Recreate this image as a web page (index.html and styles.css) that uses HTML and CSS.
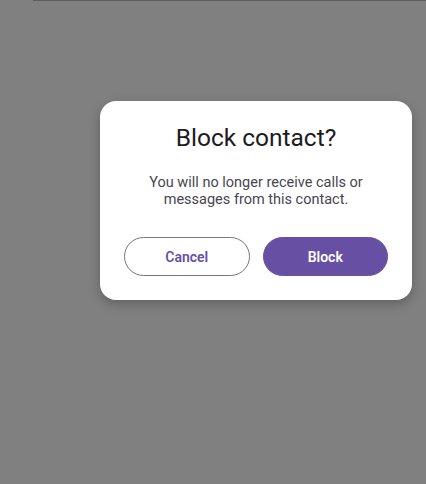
FILE: index.html
```html
<!DOCTYPE html>
<html lang="en">
<head>
<meta charset="utf-8">
<title>Block contact</title>
<link rel="stylesheet" href="styles.css">
</head>
<body>
<div class="topline"></div>
<div class="dialog" role="dialog" aria-labelledby="dlg-title">
  <h2 class="dialog-title" id="dlg-title">Block contact?</h2>
  <p class="dialog-text">You will no longer receive calls or<br>messages from this contact.</p>
  <div class="dialog-actions">
    <button class="btn btn-outline">Cancel</button>
    <button class="btn btn-filled">Block</button>
  </div>
</div>
</body>
</html>
```
FILE: styles.css
```css
html, body {
  margin: 0;
  padding: 0;
}
body {
  width: 426px;
  height: 484px;
  background: #808080;
  font-family: Roboto, "Noto Sans", "Liberation Sans", sans-serif;
  overflow: hidden;
}
.topline {
  height: 1px;
  margin-left: 33px;
  background: #5c5c5c;
}
.dialog {
  box-sizing: border-box;
  width: 312px;
  margin: 100px 0 0 100px;
  padding: 22px 24px 24px;
  background: #ffffff;
  border-radius: 16px;
  box-shadow: 0 4px 12px rgba(0, 0, 0, 0.25);
}
.dialog-title {
  margin: 0;
  font-size: 24.5px;
  line-height: 30px;
  font-weight: 400;
  color: #1d1b20;
  text-align: center;
}
.dialog-text {
  margin: 21px 0 0;
  font-size: 14.5px;
  line-height: 17px;
  color: #49454f;
  text-align: center;
}
.dialog-actions {
  display: flex;
  gap: 13px;
  margin-top: 29px;
}
.btn {
  flex: 1;
  height: 39px;
  border-radius: 20px;
  font-family: inherit;
  font-size: 14px;
  font-weight: 600;
  cursor: pointer;
}
.btn-outline {
  background: #ffffff;
  border: 1px solid #79747e;
  color: #6750a4;
}
.btn-filled {
  background: #6750a4;
  border: 1px solid #6750a4;
  color: #ffffff;
}
```
